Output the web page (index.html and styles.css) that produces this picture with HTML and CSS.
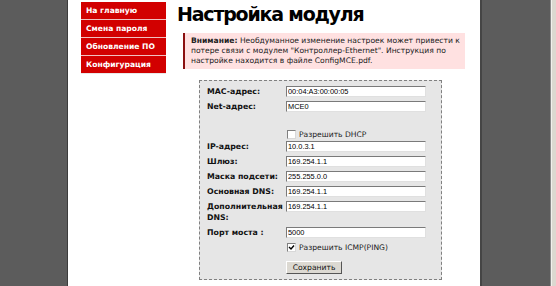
FILE: index.html
```html
<!DOCTYPE html>
<html lang="ru">
<head>
    <meta charset="UTF-8">
    <title>Настройка модуля</title>
    <link rel="stylesheet" href="styles.css">
</head>
<body>
    <div class="side side-left"></div>
    <div class="page">
        <ul class="menu">
            <li><a href="#">На главную</a></li>
            <li><a href="#">Смена пароля</a></li>
            <li><a href="#">Обновление ПО</a></li>
            <li><a href="#">Конфигурация</a></li>
        </ul>
        <div class="content">
            <h1>Настройка модуля</h1>
            <div class="warning">
                <span class="line"><b>Внимание:</b> <span>Необдуманное изменение настроек может привести к</span></span>
                <span class="line">потере связи с модулем "Контроллер-Ethernet". Инструкция по</span>
                <span class="line">настройке находится в файле ConfigMCE.pdf.</span>
            </div>
            <form class="settings">
                <div class="row">
                    <label>MAC-адрес:</label>
                    <input type="text" value="00:04:A3:00:00:05">
                </div>
                <div class="row">
                    <label>Net-адрес:</label>
                    <input type="text" value="MCE0">
                </div>
                <div class="row check check-dhcp">
                    <span class="box"></span>
                    <span>Разрешить DHCP</span>
                </div>
                <div class="row">
                    <label>IP-адрес:</label>
                    <input type="text" value="10.0.3.1">
                </div>
                <div class="row">
                    <label>Шлюз:</label>
                    <input type="text" value="169.254.1.1">
                </div>
                <div class="row">
                    <label>Маска подсети:</label>
                    <input type="text" value="255.255.0.0">
                </div>
                <div class="row">
                    <label>Основная DNS:</label>
                    <input type="text" value="169.254.1.1">
                </div>
                <div class="row">
                    <label>Дополнительная DNS:</label>
                    <input type="text" value="169.254.1.1">
                </div>
                <div class="row">
                    <label>Порт моста :</label>
                    <input type="text" value="5000">
                </div>
                <div class="row check">
                    <span class="box">
                        <svg width="7" height="7" viewBox="0 0 7 7"><path d="M1 3 L3 5 L6 1.5" fill="none" stroke="#000" stroke-width="1.4"/></svg>
                    </span>
                    <span>Разрешить ICMP(PING)</span>
                </div>
                <div class="row submit">
                    <button type="button">Сохранить</button>
                </div>
            </form>
        </div>
    </div>
    <div class="side side-right"></div>
    <div class="scroll"></div>
</body>
</html>
```

FILE: styles.css
```css
body {
    margin: 0;
    height: 286px;
    display: flex;
    font-family: "DejaVu Sans", Verdana, sans-serif;
    font-size: 8px;
    color: #000;
    background: #fff;
    overflow: hidden;
}
.side {
    background: #5c5c5c;
}
.side-left {
    width: 67px;
    border-right: 1px solid #3c3c3c;
}
.side-right {
    width: 68px;
    border-left: 2px solid #454545;
    border-right: 1px solid #8a8a8a;
}
.scroll {
    flex: 1;
    background: #dcd8d0;
    border-left: 1px solid #f2f0ec;
}
.page {
    width: 412px;
    display: flex;
    padding-left: 13px;
    box-sizing: border-box;
}
.menu {
    list-style: none;
    margin: 2px 0 0;
    padding: 0;
    width: 85px;
    align-self: flex-start;
    border-bottom: 1px solid #e8e8e8;
}
.menu li {
    border-bottom: 1px solid #f0c0c0;
}
.menu li:last-child {
    border-bottom: none;
}
.menu a {
    display: block;
    background: #d20000;
    color: #fff;
    font-weight: bold;
    text-decoration: none;
    font-size: 7.6px;
    height: 17px;
    line-height: 17px;
    padding-left: 5px;
}
.content {
    margin-left: 11px;
}
h1 {
    margin: 2px 0 0;
    font-size: 19px;
    line-height: 24px;
    font-weight: bold;
    letter-spacing: -1.2px;
}
.warning {
    margin: 7px 0 0 6px;
    width: 274px;
    background: #ffe1e1;
    border-left: 2px solid #8b1010;
    padding: 3px 0 3px 6px;
    font-size: 7.6px;
    line-height: 10px;
    color: #222;
}
.warning .line {
    display: block;
    white-space: nowrap;
}
.settings {
    margin: 11px 0 0 22px;
    width: 243px;
    box-sizing: border-box;
    background: #e6e6e6;
    border: 1px dashed #808080;
    padding: 5px 0 5px 7px;
}
.row {
    display: flex;
    align-items: flex-start;
    margin-bottom: 4px;
}
.row label {
    width: 79px;
    font-weight: bold;
    font-size: 7.8px;
    line-height: 11px;
    color: #111;
}
.row input[type="text"] {
    width: 140px;
    height: 11px;
    box-sizing: border-box;
    margin: 0;
    padding: 0 1px;
    border: 1px solid #7a7a7a;
    border-right-color: #e0e0e0;
    border-bottom-color: #e0e0e0;
    background: #fff;
    font-family: "Liberation Sans", Arial, sans-serif;
    font-size: 7.4px;
    line-height: 9px;
}
.check {
    padding-left: 79px;
    align-items: center;
    height: 10px;
    font-size: 7.6px;
    color: #222;
}
.check-dhcp {
    margin-top: 17px;
    margin-bottom: 2px;
}
.box {
    width: 7px;
    height: 7px;
    margin: 0 3px 0 1px;
    background: #fff;
    border: 1px solid #808080;
    border-right-color: #d8d8d8;
    border-bottom-color: #d8d8d8;
    display: flex;
}
.submit {
    padding-left: 79px;
    margin: 9px 0 0;
}
.submit button {
    width: 56px;
    height: 13px;
    padding: 0;
    background: #dcd9d2;
    border: 1px solid;
    border-color: #fff #555 #555 #fff;
    font-family: "DejaVu Sans", Verdana, sans-serif;
    font-size: 7.6px;
    color: #111;
}
```
